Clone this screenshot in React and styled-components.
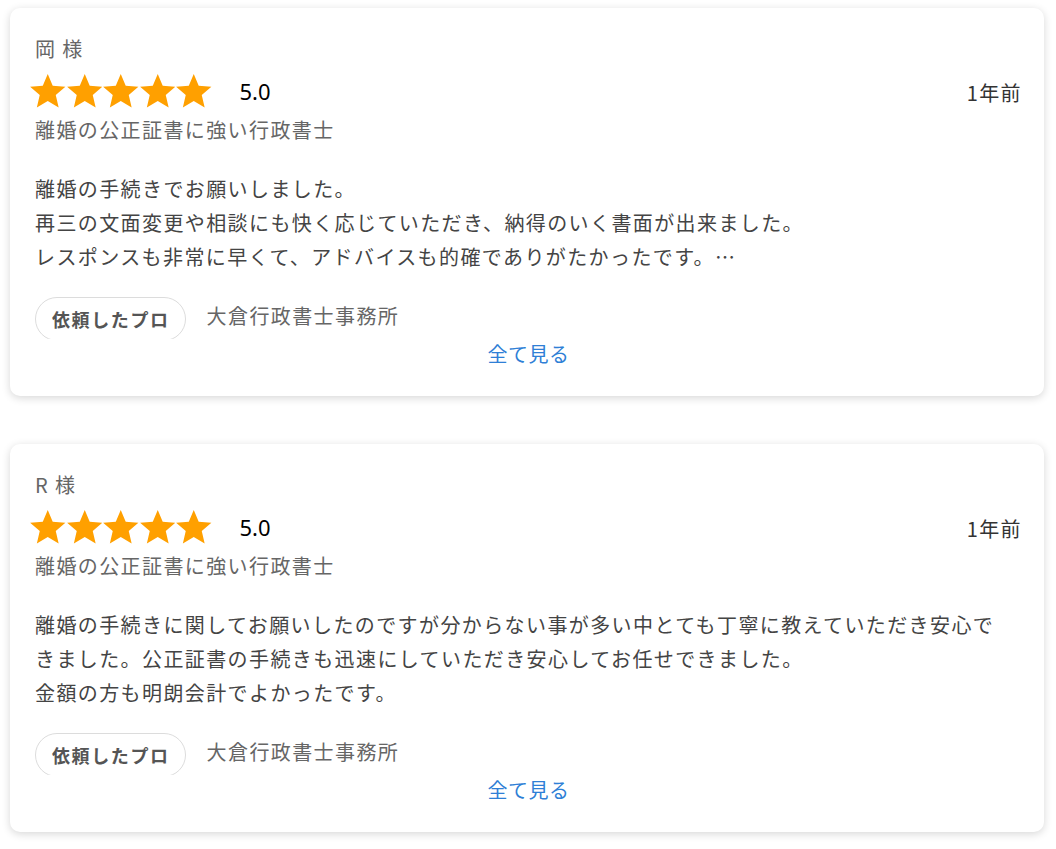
import React from "react";
import styled, { createGlobalStyle } from "styled-components";

const GlobalStyle = createGlobalStyle`
  body {
    margin: 0;
    background: #ffffff;
    font-family: "Noto Sans", "Noto Sans CJK JP", sans-serif;
  }
`;

const Page = styled.div`
  padding: 8px 12px 16px 10px;
  display: flex;
  flex-direction: column;
  gap: 48px;
`;

const Card = styled.div`
  background: #fff;
  border-radius: 10px;
  box-shadow: 0 2px 8px rgba(0, 0, 0, 0.16);
  padding: 27px 22px 28px 25px;
  display: flex;
  flex-direction: column;
`;

const Jp = styled.div`
  font-family: "Noto Sans CJK JP", sans-serif;
  font-size: 20px;
  letter-spacing: 1.4px;
  line-height: 28px;
`;

const Name = styled(Jp)`
  color: #666;
`;

const RatingRow = styled.div`
  margin-top: 8px;
  height: 40px;
  display: flex;
  align-items: center;
`;

const Stars = styled.div`
  display: flex;
  gap: 1px;
  margin-left: -5px;
`;

const Score = styled.span`
  margin-left: 28px;
  font-size: 22px;
  color: #000;
  font-family: "Noto Sans", sans-serif;
`;

const Ago = styled(Jp)`
  margin-left: auto;
  color: #333;
  padding-top: 3px;
`;

const Subtitle = styled(Jp)`
  margin-top: 5px;
  color: #666;
`;

const Body = styled(Jp)`
  margin-top: 28px;
  line-height: 34px;
  color: #444;
`;

const ProRow = styled.div`
  margin-top: 23px;
  display: flex;
  align-items: center;
  gap: 21px;
`;

const PillClip = styled.div`
  height: 42px;
  overflow: hidden;
`;

const Pill = styled.div`
  height: 44px;
  box-sizing: border-box;
  border: 1px solid #dcdcdc;
  border-radius: 22px;
  padding: 0 15px 0 16px;
  display: flex;
  align-items: center;
  font-family: "Noto Sans CJK JP", sans-serif;
  font-weight: 700;
  font-size: 18px;
  color: #555;
  letter-spacing: 1.6px;
`;

const Company = styled(Jp)`
  color: #666;
  margin-top: -4px;
`;

const SeeAll = styled(Jp)`
  margin-top: 1px;
  text-align: center;
  color: #2f7fd6;
  letter-spacing: 0.5px;
`;

const Star = () => (
  <svg width="35.5" height="33.5" viewBox="2 2 20 19">
    <path
      fill="#ffa000"
      d="M12 17.27L18.18 21l-1.64-7.03L22 9.24l-7.19-.61L12 2 9.19 8.63 2 9.24l5.46 4.73L5.82 21z"
    />
  </svg>
);

const reviews = [
  {
    name: "岡 様",
    body: [
      "離婚の手続きでお願いしました。",
      "再三の文面変更や相談にも快く応じていただき、納得のいく書面が出来ました。",
      "レスポンスも非常に早くて、アドバイスも的確でありがたかったです。…",
    ],
  },
  {
    name: "R 様",
    body: [
      "離婚の手続きに関してお願いしたのですが分からない事が多い中とても丁寧に教えていただき安心で",
      "きました。公正証書の手続きも迅速にしていただき安心してお任せできました。",
      "金額の方も明朗会計でよかったです。",
    ],
  },
];

const ReviewCard = ({ review }) => (
  <Card>
    <Name>{review.name}</Name>
    <RatingRow>
      <Stars>
        {[0, 1, 2, 3, 4].map((i) => (
          <Star key={i} />
        ))}
      </Stars>
      <Score>5.0</Score>
      <Ago>1年前</Ago>
    </RatingRow>
    <Subtitle>離婚の公正証書に強い行政書士</Subtitle>
    <Body>
      {review.body.map((line, i) => (
        <div key={i}>{line}</div>
      ))}
    </Body>
    <ProRow>
      <PillClip>
        <Pill>依頼したプロ</Pill>
      </PillClip>
      <Company>大倉行政書士事務所</Company>
    </ProRow>
    <SeeAll>全て見る</SeeAll>
  </Card>
);

export default function App() {
  return (
    <>
      <GlobalStyle />
      <Page>
        {reviews.map((r) => (
          <ReviewCard key={r.name} review={r} />
        ))}
      </Page>
    </>
  );
}
